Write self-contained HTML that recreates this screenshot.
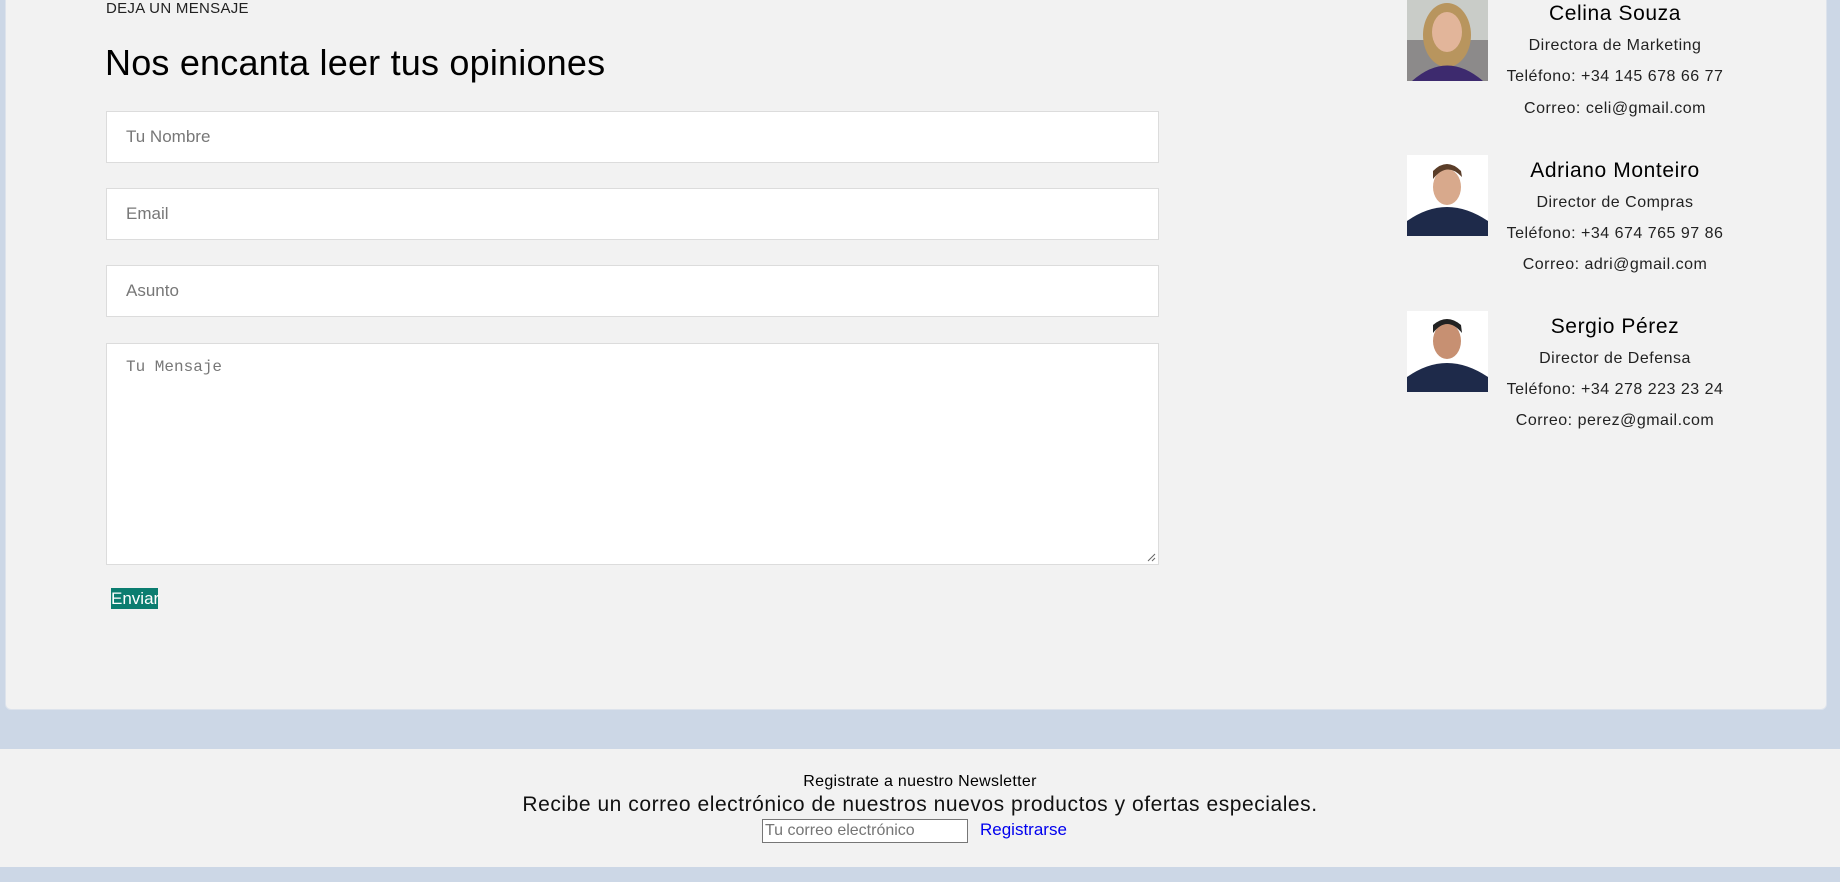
<!DOCTYPE html>
<html><head><meta charset="utf-8"><style>
*{box-sizing:border-box;margin:0;padding:0}
body{width:1840px;height:882px;background:#ccd7e6;font-family:"Liberation Sans",sans-serif;position:relative;overflow:hidden}
.card{position:absolute;left:5px;top:-10px;width:1822px;height:720px;background:#f2f2f2;border-radius:0 0 6px 6px;border:1px solid #dde3ec}
.abs{position:absolute}
.inp{position:absolute;left:106px;width:1053px;background:#fff;border:1px solid #dcdcdc;color:#777;font-size:17px;padding-left:19px}
.p{position:absolute;left:1407px;width:81px;height:81px}
.t{position:absolute;left:1475px;width:280px;text-align:center;color:#222;font-size:16px;letter-spacing:.5px}
.n{font-size:21px;color:#000;letter-spacing:.6px}
</style></head><body>
<div class="card"></div>
<div class="abs" style="left:106px;top:0;font-size:15px;color:#222;letter-spacing:.3px">DEJA UN MENSAJE</div>
<div class="abs" style="left:105px;top:42px;font-size:36px;color:#000;letter-spacing:.2px">Nos encanta leer tus opiniones</div>
<div class="inp" style="top:111px;height:52px;line-height:50px">Tu Nombre</div>
<div class="inp" style="top:188px;height:52px;line-height:50px">Email</div>
<div class="inp" style="top:265px;height:52px;line-height:50px">Asunto</div>
<div class="inp" style="top:343px;height:222px;padding-top:14px;font-family:'Liberation Mono',monospace;font-size:16px">Tu Mensaje
<svg class="abs" style="right:2px;bottom:2px" width="10" height="10"><path d="M9 2L2 9M9 6L6 9" stroke="#666"/></svg></div>
<div class="abs" style="left:111px;top:588px;width:47px;height:21px;background:#0b7d70;color:#fff;font-size:17px;line-height:21px">Enviar</div>

<svg class="p" style="top:0" viewBox="0 0 81 81"><rect width="81" height="81" fill="#8c8a8a"/><rect x="0" y="0" width="81" height="40" fill="#c9ccc8"/><ellipse cx="40" cy="35" rx="24" ry="32" fill="#b8955e"/><ellipse cx="40" cy="32" rx="15" ry="20" fill="#e2b59a"/><path d="M5 81Q40 50 76 81Z" fill="#3d2a6e"/></svg>
<svg class="p" style="top:155px" viewBox="0 0 81 81"><rect width="81" height="81" fill="#fff"/><ellipse cx="40" cy="32" rx="14" ry="18" fill="#d8a98c"/><path d="M26 24Q40 6 55 22L54 16Q40 2 26 16Z" fill="#5a3d28"/><path d="M0 81L0 66Q20 52 40 52Q60 52 81 66L81 81Z" fill="#1e2a4a"/></svg>
<svg class="p" style="top:311px" viewBox="0 0 81 81"><rect width="81" height="81" fill="#fff"/><ellipse cx="40" cy="30" rx="14" ry="18" fill="#c79072"/><path d="M26 22Q40 4 55 22L54 14Q40 2 26 14Z" fill="#222"/><path d="M0 81L0 66Q20 52 40 52Q60 52 81 66L81 81Z" fill="#1e2a4a"/></svg>

<div class="t n" style="top:2px">Celina Souza</div>
<div class="t" style="top:37px">Directora de Marketing</div>
<div class="t" style="top:68px">Teléfono: +34 145 678 66 77</div>
<div class="t" style="top:100px">Correo: celi@gmail.com</div>
<div class="t n" style="top:159px">Adriano Monteiro</div>
<div class="t" style="top:194px">Director de Compras</div>
<div class="t" style="top:225px">Teléfono: +34 674 765 97 86</div>
<div class="t" style="top:256px">Correo: adri@gmail.com</div>
<div class="t n" style="top:315px">Sergio Pérez</div>
<div class="t" style="top:350px">Director de Defensa</div>
<div class="t" style="top:381px">Teléfono: +34 278 223 23 24</div>
<div class="t" style="top:412px">Correo: perez@gmail.com</div>

<div class="abs" style="left:0;top:749px;width:1840px;height:118px;background:#f2f2f2"></div>
<div class="abs" style="left:0;top:773px;width:1840px;text-align:center;font-size:16px;color:#000;letter-spacing:.3px">Registrate a nuestro Newsletter</div>
<div class="abs" style="left:0;top:793px;width:1840px;text-align:center;font-size:21px;color:#111;letter-spacing:.55px">Recibe un correo electrónico de nuestros nuevos productos y ofertas especiales.</div>
<div class="abs" style="left:762px;top:819px;width:206px;height:24px;background:#fff;border:1px solid #767676;font-size:16px;color:#757575;line-height:22px;padding-left:2px">Tu correo electrónico</div>
<div class="abs" style="left:980px;top:820px;font-size:17px;color:#0000ee">Registrarse</div>
</body></html>
